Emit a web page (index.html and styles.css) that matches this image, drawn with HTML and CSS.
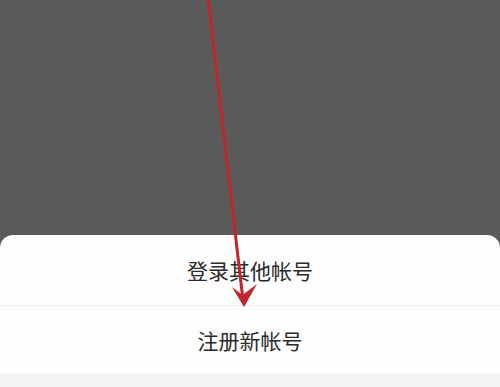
FILE: index.html
```html
<!DOCTYPE html>
<html lang="zh-CN">
<head>
<meta charset="utf-8">
<link rel="stylesheet" href="styles.css">
</head>
<body>
<div class="screen">
  <div class="backdrop"></div>
  <div class="sheet">
    <div class="option">登录其他帐号</div>
    <div class="divider"></div>
    <div class="option option-second">注册新帐号</div>
    <div class="gap"></div>
  </div>
  <svg class="arrow" width="500" height="387" viewBox="0 0 500 387" xmlns="http://www.w3.org/2000/svg">
    <line x1="208" y1="-2" x2="242.5" y2="296" stroke="#c0262b" stroke-width="3" stroke-linecap="round"/>
    <polygon points="244,307 232,287 242.5,295 257,284" fill="#c0262b"/>
  </svg>
</div>
</body>
</html>
```

FILE: styles.css
```css
html, body {
  margin: 0;
  padding: 0;
}
body {
  width: 500px;
  height: 387px;
  overflow: hidden;
  background: #5a5a5a;
  font-family: "Noto Sans CJK SC", "Noto Sans", sans-serif;
}
.screen {
  position: relative;
  width: 500px;
  height: 387px;
  display: flex;
  flex-direction: column;
}
.backdrop {
  height: 235px;
  flex: none;
  background: #5a5a5a;
}
.sheet {
  flex: 1;
  background: #fdfdfd;
  border-radius: 13px 13px 0 0;
  display: flex;
  flex-direction: column;
}
.option {
  height: 70px;
  display: flex;
  align-items: center;
  justify-content: center;
  font-size: 21px;
  color: #2a2a2a;
  letter-spacing: 0;
}
.option-second {
  height: 68px;
}
.divider {
  height: 1px;
  background: #f1f1f1;
}
.gap {
  flex: 1;
  background: #f5f5f5;
  border-top: 1px solid #efefef;
}
.arrow {
  position: absolute;
  left: 0;
  top: 0;
}
```
